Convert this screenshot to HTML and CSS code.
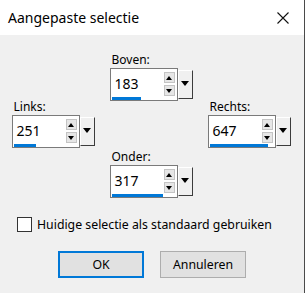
FILE: index.html
```html
<!DOCTYPE html>
<html lang="nl">
  <head>
    <meta charset="UTF-8" />
    <title>Aangepaste selectie</title>
    <link rel="stylesheet" href="styles.css">
  </head>
  <body>
    <div class="dialog">
      <!-- Title bar -->
      <div class="titlebar">
        <span class="title">Aangepaste selectie</span>
        <svg class="close" width="12" height="12" viewBox="0 0 12 12">
          <path d="M0.5 0.5 L11.5 11.5 M11.5 0.5 L0.5 11.5" stroke="#111" stroke-width="1.1" fill="none" />
        </svg>
      </div>

      <div class="content">
        <!-- Selection fields -->
        <div class="fields">
          <div class="field boven">
            <label>Boven:</label>
            <div class="spin">
              <div class="box">
                <div class="row">
                  <span class="value">183</span>
                  <div class="arrows">
                    <span class="arrow up"></span>
                    <span class="arrow down"></span>
                  </div>
                </div>
                <div class="bar" style="width: 29px"></div>
              </div>
              <div class="drop"></div>
            </div>
          </div>

          <div class="field links">
            <label>Links:</label>
            <div class="spin">
              <div class="box">
                <div class="row">
                  <span class="value">251</span>
                  <div class="arrows">
                    <span class="arrow up"></span>
                    <span class="arrow down"></span>
                  </div>
                </div>
                <div class="bar" style="width: 22px"></div>
              </div>
              <div class="drop"></div>
            </div>
          </div>

          <div class="field rechts">
            <label>Rechts:</label>
            <div class="spin">
              <div class="box">
                <div class="row">
                  <span class="value">647</span>
                  <div class="arrows">
                    <span class="arrow up"></span>
                    <span class="arrow down"></span>
                  </div>
                </div>
                <div class="bar" style="width: 58px"></div>
              </div>
              <div class="drop"></div>
            </div>
          </div>

          <div class="field onder">
            <label>Onder:</label>
            <div class="spin">
              <div class="box">
                <div class="row">
                  <span class="value">317</span>
                  <div class="arrows">
                    <span class="arrow up"></span>
                    <span class="arrow down"></span>
                  </div>
                </div>
                <div class="bar" style="width: 51px"></div>
              </div>
              <div class="drop"></div>
            </div>
          </div>
        </div>

        <!-- Default checkbox -->
        <div class="check">
          <span class="checkbox"></span>
          <span>Huidige selectie als standaard gebruiken</span>
        </div>

        <!-- Buttons -->
        <div class="buttons">
          <button class="btn ok">OK</button>
          <button class="btn">Annuleren</button>
        </div>
      </div>
    </div>
  </body>
</html>
```

FILE: styles.css
```css
* {
  box-sizing: border-box;
  margin: 0;
  padding: 0;
}

body {
  font-family: "Noto Sans", "Open Sans", sans-serif;
  font-size: 12px;
  color: #000;
  background-color: #f0f0f0;
}

.dialog {
  width: 305px;
  height: 293px;
  background-color: #f0f0f0;
  border-right: 1px solid #4a4a4a;
}

.titlebar {
  height: 35px;
  background-color: #fff;
  display: flex;
  align-items: center;
  justify-content: space-between;
  padding: 0 15px 0 8px;
}

.title {
  font-size: 14px;
  color: #000;
}

.close {
  display: block;
}

.content {
  padding-top: 17px;
}

.fields {
  display: grid;
  grid-template-columns: 85px 85px 85px;
  column-gap: 13px;
  justify-content: center;
}

.field label {
  display: block;
  height: 16px;
  line-height: 16px;
  padding-left: 2px;
}

.boven {
  grid-column: 2;
  grid-row: 1;
}

.links {
  grid-column: 1;
  grid-row: 2;
  margin-top: -2px;
}

.rechts {
  grid-column: 3;
  grid-row: 2;
  margin-top: -2px;
}

.onder {
  grid-column: 2;
  grid-row: 3;
  margin-top: 1px;
}

.spin {
  display: flex;
  align-items: flex-start;
}

.box {
  width: 68px;
  height: 33px;
  background-color: #fff;
  border: 1px solid #7a7a7a;
  display: flex;
  flex-direction: column;
}

.row {
  height: 28px;
  display: flex;
  align-items: center;
  justify-content: space-between;
  padding: 0 2px 0 4px;
}

.value {
  font-size: 14px;
}

.arrows {
  display: flex;
  flex-direction: column;
  gap: 2px;
  margin-top: 2px;
}

.arrow {
  width: 11px;
  height: 11px;
  background-color: #e6e6e6;
  border: 1px solid #c4c4c4;
  display: flex;
  align-items: center;
  justify-content: center;
}

.arrow::after {
  content: "";
  width: 0;
  height: 0;
  border-left: 3px solid transparent;
  border-right: 3px solid transparent;
}

.up::after {
  border-bottom: 4px solid #000;
}

.down::after {
  border-top: 4px solid #000;
}

.bar {
  height: 3px;
  margin-left: 1px;
  background-color: #0078d7;
}

.drop {
  width: 15px;
  height: 29px;
  margin-top: 2px;
  background-color: #f0f0f0;
  border-top: 1px solid #fff;
  border-left: 1px solid #fff;
  border-right: 1px solid #3c3c3c;
  border-bottom: 1px solid #3c3c3c;
  display: flex;
  justify-content: center;
  padding-top: 10px;
}

.drop::after {
  content: "";
  width: 0;
  height: 0;
  border-left: 4px solid transparent;
  border-right: 4px solid transparent;
  border-top: 5px solid #000;
}

.check {
  display: flex;
  align-items: center;
  gap: 5px;
  margin: 18px 0 0 17px;
  font-size: 12.3px;
}

.checkbox {
  width: 15px;
  height: 15px;
  border: 1px solid #333;
  background-color: #fff;
}

.buttons {
  display: flex;
  justify-content: center;
  gap: 16px;
  margin-top: 18px;
}

.btn {
  width: 86px;
  height: 27px;
  font-family: inherit;
  font-size: 12.3px;
  color: #000;
  background-color: #e1e1e1;
  border: 1px solid #adadad;
}

.btn.ok {
  border: 2px solid #0078d7;
}
```
